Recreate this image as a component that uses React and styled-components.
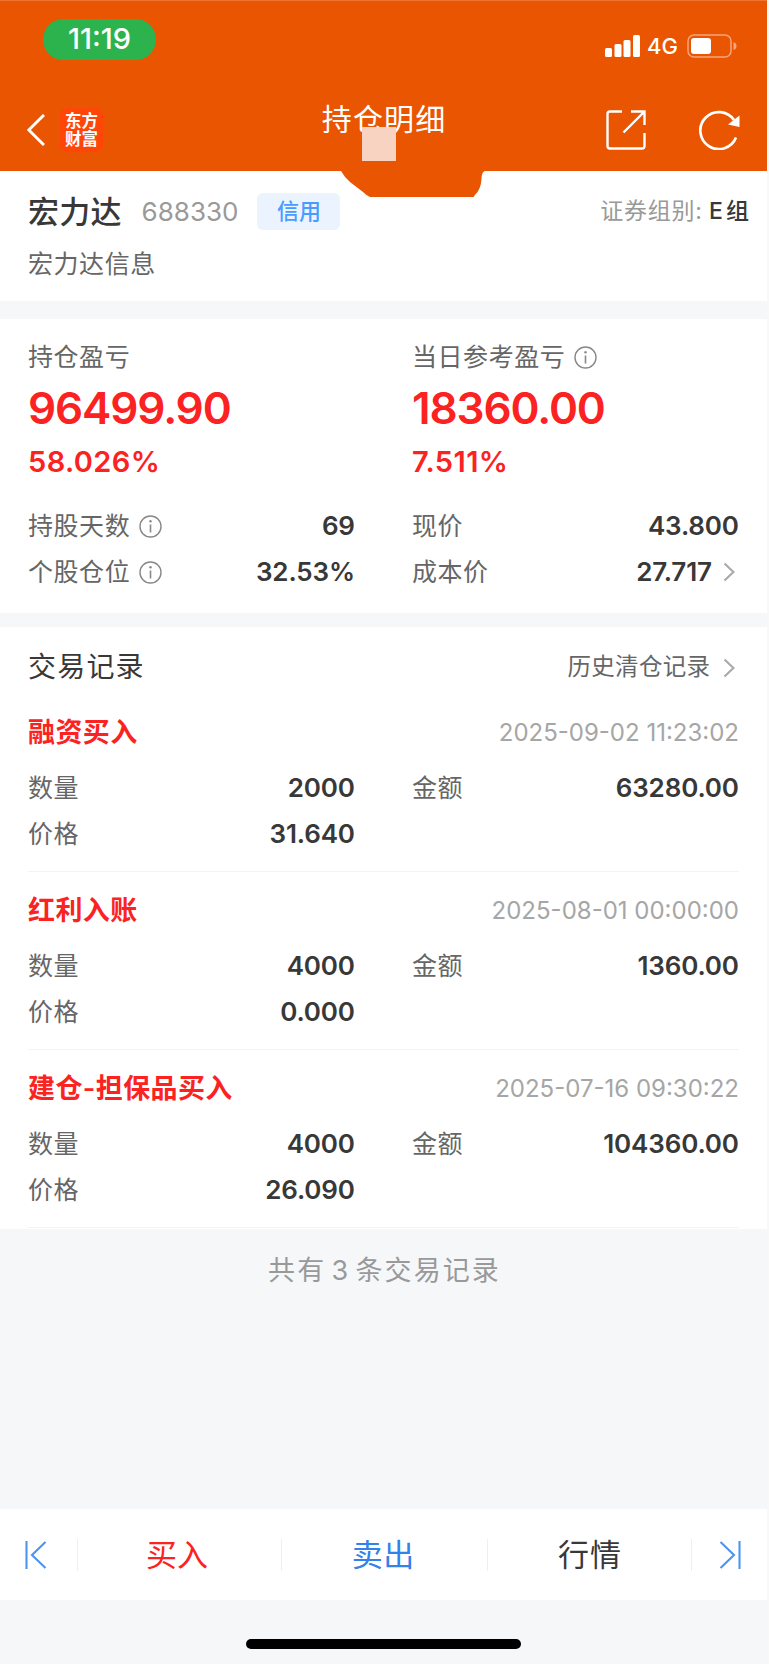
import React from 'react';
import styled, { createGlobalStyle } from 'styled-components';

const GlobalStyle = createGlobalStyle`
  * {
    box-sizing: border-box;
  }

  body {
    margin: 0;
    background-color: #f6f7f9;
    font-family: Inter, 'Noto Sans CJK SC', sans-serif;
    color: #333;
  }
`;

const Page = styled.div`
  display: flex;
  flex-direction: column;
  width: 769px;
  height: 1664px;
  border-right: 2px solid #f8f8f9;
  background-color: #f6f7f9;
  overflow: hidden;
`;

const Text = styled.span`
  color: ${(props) => props.$color || '#383838'};
  font-size: ${(props) => props.$size || 25}px;
  font-weight: ${(props) => props.$weight || 400};
  letter-spacing: ${(props) => props.$spacing || 0}px;
  word-spacing: ${(props) => props.$wordSpacing || 0}px;
  margin-right: ${(props) => -(props.$spacing || 0)}px;
  line-height: 1.2;
  white-space: nowrap;
`;

const Header = styled.header`
  position: relative;
  height: 171px;
  border-top: 1px solid #ee7434;
  background-color: #ea5502;
`;

const StatusBar = styled.div`
  display: flex;
  justify-content: space-between;
  align-items: flex-start;
  height: 80px;
  padding: 17.5px 30px 0 43px;
`;

const TimePill = styled.div`
  display: flex;
  align-items: center;
  justify-content: center;
  width: 113px;
  height: 41px;
  padding-top: 1px;
  border-radius: 21px;
  background-color: #2db34d;
`;

const Indicators = styled.div`
  display: flex;
  align-items: center;
  height: 24px;
  margin-top: 15.5px;
`;

const Signal = styled.svg`
  margin-right: 6px;
`;

const Battery = styled.svg`
  margin-left: 9px;
`;

const NavBar = styled.div`
  display: grid;
  grid-template-columns: 1fr auto 1fr;
  align-items: center;
  height: 90px;
  padding: 8px 27px 0;
`;

const NavTitle = styled.h1`
  display: flex;
  margin: 0;
  padding-bottom: 23px;
`;

const NavLeft = styled.div`
  display: flex;
  align-items: center;
  gap: 15px;
`;

const NavRight = styled.div`
  display: flex;
  align-items: center;
  justify-content: flex-end;
  gap: 53px;
`;

const Logo = styled.div`
  display: flex;
  flex-direction: column;
  align-items: center;
  justify-content: center;
  width: 43px;
  height: 44px;
  border-radius: 8px;
  background-color: #ff4508;
  color: #fff;
  font-size: 16.5px;
  font-weight: 700;
  line-height: 18px;
`;

// hand painted patch that hangs below the header
const Smudge = styled.svg`
  position: absolute;
  left: 340px;
  top: 169px;
`;

const Patch = styled.div`
  position: absolute;
  left: 362px;
  top: 126px;
  width: 34px;
  height: 34px;
  background-color: #f8d3c1;
`;

const Panel = styled.section`
  background-color: #fff;
  padding: ${(props) => props.$padding};
  margin-bottom: ${(props) => props.$gap || 0}px;
  height: ${(props) => props.$height}px;
`;

const Row = styled.div`
  display: flex;
  align-items: center;
  justify-content: ${(props) => (props.$between ? 'space-between' : 'flex-start')};
  height: ${(props) => props.$height}px;
`;

const Tag = styled.span`
  display: flex;
  align-items: center;
  justify-content: center;
  width: 83px;
  height: 37px;
  margin-left: 19px;
  border-radius: 6px;
  background-color: #ebf3ff;
`;

const Code = styled.div`
  display: flex;
  margin-left: 20px;
`;

const Group = styled.div`
  display: flex;
  align-items: center;
  gap: 7px;
  margin-left: auto;
`;

const Columns = styled.div`
  display: grid;
  grid-template-columns: 327px 327px;
  column-gap: 57px;
`;

const Info = styled.svg`
  margin-left: 9px;
`;

const Chevron = styled.svg`
  margin: 0 4px 0 ${(props) => props.$space}px;
`;

const Record = styled.article`
  height: 178px;
  padding-top: 15px;
  border-bottom: 1.5px solid #f3f4f5;
`;

const Summary = styled.p`
  display: flex;
  justify-content: center;
  margin: 0;
  padding-top: 26px;
  flex: 1;
`;

const TabBar = styled.nav`
  display: flex;
  align-items: center;
  height: 91px;
  margin-bottom: 64px;
  background-color: #fff;
`;

const Tab = styled.div`
  display: flex;
  align-items: center;
  justify-content: center;
  width: ${(props) => props.$width}px;
  height: 32px;
  padding-right: ${(props) => props.$shift || 0}px;
  border-right: ${(props) => (props.$last ? 'none' : '1px solid #eeeff1')};
`;

const HomeIndicator = styled.div`
  position: absolute;
  left: 246px;
  top: 1639px;
  width: 275px;
  height: 10px;
  border-radius: 5px;
  background-color: #000;
`;

const records = [
  {
    type: '融资买入',
    time: '2025-09-02 11:23:02',
    quantity: '2000',
    amount: '63280.00',
    price: '31.640',
  },
  {
    type: '红利入账',
    time: '2025-08-01 00:00:00',
    quantity: '4000',
    amount: '1360.00',
    price: '0.000',
  },
  {
    type: '建仓-担保品买入',
    time: '2025-07-16 09:30:22',
    quantity: '4000',
    amount: '104360.00',
    price: '26.090',
  },
];

const InfoIcon = () => (
  <Info width="23" height="23" viewBox="0 0 23 23" fill="none" stroke="#888">
    <circle cx="11.5" cy="11.5" r="10.5" strokeWidth="1.4" />
    <path d="M11.5 9.5v8" strokeWidth="1.6" />
    <circle cx="11.5" cy="6.3" r="1.2" fill="#888" stroke="none" />
  </Info>
);

const ChevronIcon = ({ space }) => (
  <Chevron $space={space} width="12" height="20" viewBox="0 0 12 20" fill="none">
    <path d="M1.5 1.5L10.5 10L1.5 18.5" stroke="#aaa" strokeWidth="2.2" />
  </Chevron>
);

const Label = ({ children }) => (
  <Text $color="#666" $size={25} $spacing={0.55}>
    {children}
  </Text>
);

const Field = ({ label, value, info, arrow, height = 46 }) => (
  <Row $between $height={height}>
    <Row>
      <Label>{label}</Label>
      {info && <InfoIcon />}
    </Row>
    <Row>
      <Text $size={26} $weight={600} $spacing={-0.15}>
        {value}
      </Text>
      {arrow && <ChevronIcon space={11} />}
    </Row>
  </Row>
);

const Profit = ({ label, value, percent, info }) => (
  <div>
    <Row $height={30}>
      <Label>{label}</Label>
      {info && <InfoIcon />}
    </Row>
    <Row $height={72}>
      <Text $color="#fb2222" $size={44} $weight={600} $spacing={-1.1}>
        {value}
      </Text>
    </Row>
    <Row $height={37}>
      <Text $color="#fb2222" $size={29} $weight={600} $spacing={0.4}>
        {percent}
      </Text>
    </Row>
  </div>
);

const App = () => {
  return (
    <>
      <GlobalStyle />
      <Page>
        <Header>
          <StatusBar>
            <TimePill>
              <Text $color="#fff" $size={29} $weight={500}>
                11:19
              </Text>
            </TimePill>
            <Indicators>
              <Signal width="36" height="22" viewBox="0 0 36 22" fill="#fff">
                <rect x="0" y="13" width="7" height="9" rx="1.5" />
                <rect x="9.5" y="9" width="7" height="13" rx="1.5" />
                <rect x="18.5" y="5" width="7" height="17" rx="1.5" />
                <rect x="28" y="0" width="7" height="22" rx="1.5" />
              </Signal>
              <Text $color="#fff" $size={22} $weight={500}>
                4G
              </Text>
              <Battery width="50" height="24" viewBox="0 0 50 24">
                <rect
                  x="1"
                  y="1"
                  width="43"
                  height="22"
                  rx="6"
                  fill="none"
                  stroke="#f4a57c"
                  strokeWidth="1.5"
                />
                <rect x="4" y="4" width="20" height="16" rx="3" fill="#fff" />
                <path d="M46.5 8v8q3-1 3-4t-3-4z" fill="#f4a57c" />
              </Battery>
            </Indicators>
          </StatusBar>
          <NavBar>
            <NavLeft>
              <svg width="18" height="32" viewBox="0 0 18 32" fill="none">
                <path d="M17 1L1.8 16L17 31" stroke="#fff" strokeWidth="3" />
              </svg>
              <Logo>
                <span>东方</span>
                <span>财富</span>
              </Logo>
            </NavLeft>
            <NavTitle>
              <Text $color="#fff" $size={30} $spacing={1.1}>
                持仓明细
              </Text>
            </NavTitle>
            <NavRight>
              <svg
                width="40"
                height="40"
                viewBox="0 0 40 40"
                fill="none"
                stroke="#fff"
                strokeWidth="2.4"
              >
                <path d="M16 1.5H4Q1.5 1.5 1.5 4V36Q1.5 38.5 4 38.5H36Q38.5 38.5 38.5 36V23" />
                <path d="M25 1.5H38.5V15M38 2L17.5 22.5" />
              </svg>
              <svg width="41" height="40" viewBox="0 0 41 40" fill="none">
                <path
                  d="M37 27.5A18.5 18.5 0 1 1 35 10"
                  stroke="#fff"
                  strokeWidth="2.7"
                />
                <path d="M40.5 5.5V17L29 14.5z" fill="#fff" />
              </svg>
            </NavRight>
          </NavBar>
          <Smudge width="146" height="28" viewBox="0 0 146 28" fill="#ea5502">
            <path d="M0 0H146L144 1.5Q141.5 3 141.5 9Q141 19 135 25L133.5 27H30Q27 26 23 22L10 12Q5 8 1 1z" />
          </Smudge>
          <Patch />
        </Header>

        <Panel $height={130} $gap={18} $padding="22px 18px 0 28px">
          <Row $height={37}>
            <Text $size={31} $weight={500} $spacing={0.3}>
              宏力达
            </Text>
            <Code>
              <Text $color="#999" $size={26}>
                688330
              </Text>
            </Code>
            <Tag>
              <Text $color="#4a9bff" $size={22} $weight={500}>
                信用
              </Text>
            </Tag>
            <Group>
              <Text $color="#999" $size={23} $spacing={0.8}>
                证券组别:
              </Text>
              <Text $size={23} $weight={500} $wordSpacing={-3}>
                E 组
              </Text>
            </Group>
          </Row>
          <Row $height={67}>
            <Label>宏力达信息</Label>
          </Row>
        </Panel>

        <Panel $height={294} $gap={14} $padding="23px 28px 0">
          <Columns>
            <Profit label="持仓盈亏" value="96499.90" percent="58.026%" />
            <Profit
              label="当日参考盈亏"
              value="18360.00"
              percent="7.511%"
              info
            />
          </Columns>
          <Row $height={22} />
          <Columns>
            <Field label="持股天数" value="69" info />
            <Field label="现价" value="43.800" />
            <Field label="个股仓位" value="32.53%" info />
            <Field label="成本价" value="27.717" arrow />
          </Columns>
        </Panel>

        <Panel $height={602} $padding="17px 28px 0">
          <Row $between $height={47}>
            <Text $size={28} $spacing={1.2}>
              交易记录
            </Text>
            <Row>
              <Text $color="#666" $size={23.5} $spacing={0.3}>
                历史清仓记录
              </Text>
              <ChevronIcon space={13} />
            </Row>
          </Row>
          <Row $height={3} />
          {records.map((record) => (
            <Record key={record.time}>
              <Row $between $height={48}>
                <Text $color="#fb2222" $size={27} $weight={600} $spacing={0.4}>
                  {record.type}
                </Text>
                <Text $color="#a6a6a6" $size={24}>
                  {record.time}
                </Text>
              </Row>
              <Row $height={8} />
              <Columns>
                <Field label="数量" value={record.quantity} />
                <Field label="金额" value={record.amount} />
                <Field label="价格" value={record.price} />
              </Columns>
            </Record>
          ))}
        </Panel>

        <Summary>
          <Text $color="#999" $size={27} $spacing={2.1} $wordSpacing={-4.5}>
            共有 3 条交易记录
          </Text>
        </Summary>

        <TabBar>
          <Tab $width={78} $shift={6}>
            <svg width="22" height="28" viewBox="0 0 22 28" fill="none">
              <path
                d="M1.5 0V28M20.5 1L7 14L20.5 27"
                stroke="#4c94f0"
                strokeWidth="2.1"
              />
            </svg>
          </Tab>
          <Tab $width={204} $shift={5}>
            <Text $color="#fb2222" $size={31}>
              买入
            </Text>
          </Tab>
          <Tab $width={206} $shift={3}>
            <Text $color="#3381ea" $size={31} $spacing={0.4}>
              卖出
            </Text>
          </Tab>
          <Tab $width={204}>
            <Text $size={31} $spacing={0.8}>
              行情
            </Text>
          </Tab>
          <Tab $width={75} $last>
            <svg width="22" height="28" viewBox="0 0 22 28" fill="none">
              <path
                d="M20.5 0V28M1.5 1L15 14L1.5 27"
                stroke="#4c94f0"
                strokeWidth="2.1"
              />
            </svg>
          </Tab>
        </TabBar>
        <HomeIndicator />
      </Page>
    </>
  );
};

export default App;
